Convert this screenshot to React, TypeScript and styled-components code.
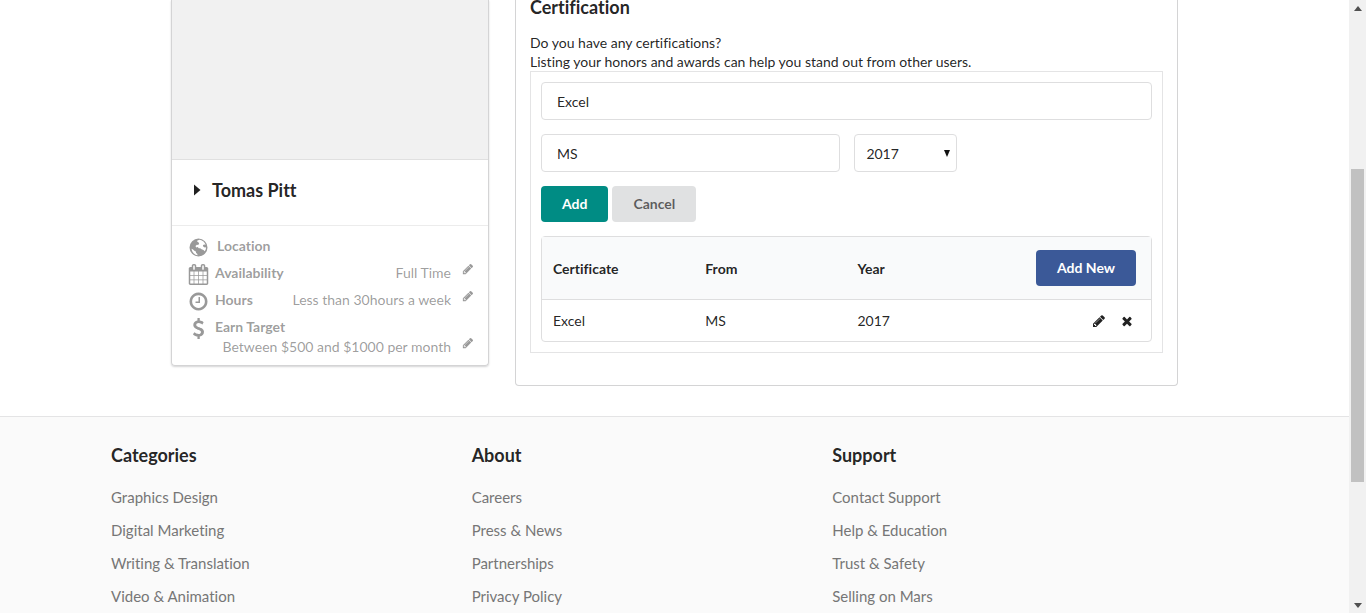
import React, { useState } from "react";
import styled, { createGlobalStyle } from "styled-components";

const GlobalStyle = createGlobalStyle`
  *, *::before, *::after { box-sizing: border-box; }
  body {
    margin: 0;
    background: #fff;
    color: rgba(0, 0, 0, 0.87);
    font-family: Lato, "Liberation Sans", sans-serif;
    font-size: 14px;
    line-height: 19px;
    font-variant-ligatures: none;
  }
  button, input, select { font: inherit; }
`;

const glyphs = {
  pencil:
    "M491 1536l91-91-235-235-91 91v107h128v128h107zm523-928q0-22-22-22-10 0-17 7l-542 542q-7 7-7 17 0 22 22 22 10 0 17-7l542-542q7-7 7-17zm-54-192l416 416-832 832h-416v-416zm683 96q0 53-37 90l-166 166-416-416 166-165q36-38 90-38 53 0 91 38l235 234q37 39 37 91z",
  close:
    "M1490 1322q0 40-28 68l-136 136q-28 28-68 28t-68-28l-294-294-294 294q-28 28-68 28t-68-28l-136-136q-28-28-28-68t28-68l294-294-294-294q-28-28-28-68t28-68l136-136q28-28 68-28t68 28l294 294 294-294q28-28 68-28t68 28l136 136q28 28 28 68t-28 68l-294 294 294 294q28 28 28 68z",
  clock:
    "M1024 544v448q0 14-9 23t-23 9h-320q-14 0-23-9t-9-23v-64q0-14 9-23t23-9h224v-352q0-14 9-23t23-9h64q14 0 23 9t9 23zm416 352q0-148-73-273t-198-198-273-73-273 73-198 198-73 273 73 273 198 198 273 73 273-73 198-198 73-273zm224 0q0 209-103 385.5t-279.5 279.5-385.5 103-385.5-103-279.5-279.5-103-385.5 103-385.5 279.5-279.5 385.5-103 385.5 103 279.5 279.5 103 385.5z",
  calendar:
    "M192 1664h288v-288h-288v288zm352 0h320v-288h-320v288zm-352-352h288v-320h-288v320zm352 0h320v-320h-320v320zm-352-384h288v-288h-288v288zm736 736h320v-288h-320v288zm-384-736h320v-288h-320v288zm768 736h288v-288h-288v288zm-384-352h320v-320h-320v320zm-352-864v-288q0-13-9.5-22.5t-22.5-9.5h-64q-13 0-22.5 9.5t-9.5 22.5v288q0 13 9.5 22.5t22.5 9.5h64q13 0 22.5-9.5t9.5-22.5zm736 864h288v-320h-288v320zm-384-384h320v-288h-320v288zm384 0h288v-288h-288v288zm32-480v-288q0-13-9.5-22.5t-22.5-9.5h-64q-13 0-22.5 9.5t-9.5 22.5v288q0 13 9.5 22.5t22.5 9.5h64q13 0 22.5-9.5t9.5-22.5zm384-64v1280q0 52-38 90t-90 38h-1408q-52 0-90-38t-38-90v-1280q0-52 38-90t90-38h128v-96q0-66 47-113t113-47h64q66 0 113 47t47 113v96h384v-96q0-66 47-113t113-47h64q66 0 113 47t47 113v96h128q52 0 90 38t38 90z",
  dollar:
    "M1362 1185q0 153-99.5 263.5t-258.5 136.5v175q0 14-9 23t-23 9h-135q-13 0-22.5-9.5t-9.5-22.5v-175q-66-9-127.5-31t-101.5-44.5-74-48-46.5-37.5-17.5-18q-17-21-2-41l103-135q7-10 23-12 15-2 24 9l2 2q113 99 243 125 37 8 74 8 81 0 142.5-43t61.5-122q0-28-15-53t-33.5-42-58.5-37.5-66-32-80-32.5q-39-16-61.5-25t-61.5-26.5-62.5-31-56.5-35.5-53.5-42.5-43.5-49-35.5-58-21-66.5-8.5-78q0-138 98-242t255-134v-180q0-13 9.5-22.5t22.5-9.5h135q14 0 23 9t9 23v176q57 6 110.5 23t87 33.5 63.5 37.5 39 29 15 14q17 18 5 38l-81 146q-8 15-23 16-14 3-27-7-3-3-14.5-12t-39-26.5-58.5-32-74.5-26-85.5-11.5q-95 0-155 43t-60 111q0 26 8.5 48t29.5 41.5 39.5 33 56 31 60.5 27 70 27.5q53 20 81 31.5t76 35 75.5 42.5 62 50 53 63.5 31.5 76.5 13 94z",
  globe:
    "M896 128a768 768 0 1 0 0 1536a768 768 0 1 0 0-1536zM800 290l190-60 150 50 180 110 120 150 60 130-130-20-100 60 40 130 130 60 100-30-20 180-90 170-110-120-160-50-120-90-120 10-90-110-130 30-60-120 120-110 110 30 80-130-60-110-100-50zM300 1000l130 60 110 110 130 60 20 130 90 70 40 130-170-50-170-120-120-170z",
};

type GlyphName = keyof typeof glyphs;

function Icon({ name, size }: { name: GlyphName; size: number }) {
  return (
    <svg width={size} height={size} viewBox="0 0 1792 1792" fill="currentColor" fillRule="evenodd" aria-hidden="true">
      <path d={glyphs[name]} />
    </svg>
  );
}

const Window = styled.div`
  display: flex;
  height: 100vh;
  overflow: hidden;
`;

const Page = styled.div`
  flex: 1;
  min-width: 0;
`;

const Profile = styled.main`
  display: grid;
  grid-template-columns: minmax(0, 318fr) minmax(0, 663fr);
  align-items: start;
  gap: 26px;
  max-width: 1007px;
  margin: 0 auto 30px;
`;

const Card = styled.aside`
  border: 1px solid #d4d4d5;
  border-top: 0;
  border-radius: 0 0 4px 4px;
  box-shadow: 0 1px 2px #d4d4d5;
`;

const Photo = styled.div`
  height: 160px;
  background: #f1f1f1;
  border-bottom: 1px solid #e0e0e0;
`;

const NameBar = styled.div`
  display: flex;
  align-items: center;
  height: 66px;
  padding: 0 22px 5px;
  gap: 11px;
  border-bottom: 1px solid #ececec;
`;

const Name = styled.h2`
  margin: 0;
  font-size: 18px;
  line-height: 24px;
  font-weight: 700;
`;

const Details = styled.dl`
  display: grid;
  gap: 7px;
  margin: 0;
  padding: 10px 14px 8px 16px;
  color: rgba(0, 0, 0, 0.4);
`;

const Detail = styled.div<{ $wrap?: boolean }>`
  display: flex;
  flex-wrap: ${(p) => (p.$wrap ? "wrap" : "nowrap")};
  line-height: 20px;
`;

const Label = styled.dt<{ $wide?: boolean }>`
  display: flex;
  height: 20px;
  gap: ${(p) => (p.$wide ? "8px" : "6px")};
  font-weight: 700;
  svg { margin-top: 1px; }
`;

const Value = styled.dd<{ $full?: boolean }>`
  display: flex;
  justify-content: flex-end;
  flex: ${(p) => (p.$full ? "0 0 100%" : "1")};
  height: 20px;
  gap: 11px;
  margin: 0;
  line-height: 19px;
`;

const IconButton = styled.button`
  display: inline-flex;
  align-self: flex-start;
  padding: 0;
  border: 0;
  background: none;
  color: inherit;
  cursor: pointer;
`;

const Panel = styled.section`
  padding: 0 14px 32px;
  border: 1px solid #d4d4d5;
  border-top: 0;
  border-radius: 0 0 4px 4px;
`;

const PanelTitle = styled.h3`
  margin: 0 0 19px;
  font-size: 18px;
  line-height: 14px;
  font-weight: 700;
`;

const Text = styled.p`
  margin: 0;
`;

const Frame = styled.div`
  display: grid;
  gap: 14px;
  padding: 10px;
  border: 1px solid #e4e4e5;
`;

const FieldRow = styled.div`
  display: flex;
  gap: 14px;
`;

const Field = styled.input<{ $half?: boolean }>`
  width: ${(p) => (p.$half ? "49%" : "100%")};
  height: 38px;
  padding: 0 15px;
  border: 1px solid #dededf;
  border-radius: 4px;
  background: #fff;
  color: inherit;
`;

const YearBox = styled.div`
  position: relative;
  width: 103px;
`;

const YearSelect = styled.select`
  appearance: none;
  width: 100%;
  height: 38px;
  padding: 0 11px;
  border: 1px solid #dededf;
  border-radius: 4px;
  background: #fff;
  color: inherit;
`;

const SelectArrow = styled.svg`
  position: absolute;
  top: 16px;
  right: 7px;
  pointer-events: none;
`;

const Actions = styled.div`
  display: flex;
  gap: 4px;
`;

const tones = {
  teal: "#008c84",
  grey: "#e0e1e2",
  blue: "#3b5998",
};

const Button = styled.button<{ $tone: keyof typeof tones }>`
  height: 36px;
  padding: 0 21px 2px;
  border: 0;
  border-radius: 4px;
  background: ${(p) => tones[p.$tone]};
  color: ${(p) => (p.$tone === "grey" ? "rgba(0, 0, 0, 0.6)" : "#fff")};
  font-weight: 700;
  cursor: pointer;
`;

const Table = styled.table`
  width: 100%;
  table-layout: fixed;
  border: 1px solid #dededf;
  border-radius: 4px;
  border-spacing: 0;
  text-align: left;

  th, td { padding: 0 11px; }
  th {
    height: 63px;
    background: #f9fafb;
    border-bottom: 1px solid #dededf;
    font-weight: 700;
  }
  td { height: 41px; }
  th:last-child { padding-right: 15px; text-align: right; }
  td:last-child { padding-right: 17px; }
`;

const RowActions = styled.div`
  display: flex;
  justify-content: flex-end;
  gap: 14px;
`;

const Footer = styled.footer`
  min-height: 100vh;
  padding: 26px 14px;
  border-top: 1px solid #e4e4e5;
  background: #fafafa;
`;

const FooterGrid = styled.div`
  display: grid;
  grid-template-columns: repeat(3, 32%);
  max-width: 1127px;
  margin: 0 auto;
`;

const FooterTitle = styled.h4`
  margin: 0 0 20px;
  font-size: 18px;
  line-height: 24px;
  font-weight: 700;
`;

const LinkList = styled.ul`
  display: grid;
  gap: 13px;
  margin: 0;
  padding: 0;
  list-style: none;
  line-height: 20px;
`;

const FooterLink = styled.a`
  display: block;
  color: #767676;
  font-size: 15px;
  text-decoration: none;
`;

const Rail = styled.div`
  display: flex;
  flex-direction: column;
  align-items: center;
  width: 17px;
  padding: 6px 0 5px;
  background: #f1f1f1;
`;

const Before = styled.div`
  flex: 158;
`;

const Thumb = styled.div`
  flex: 313;
  width: 13px;
  background: #c1c1c1;
`;

const After = styled.div`
  flex: 121;
`;

const footerGroups = [
  { title: "Categories", links: ["Graphics Design", "Digital Marketing", "Writing & Translation", "Video & Animation"] },
  { title: "About", links: ["Careers", "Press & News", "Partnerships", "Privacy Policy"] },
  { title: "Support", links: ["Contact Support", "Help & Education", "Trust & Safety", "Selling on Mars"] },
];

function EditButton({ label }: { label: string }) {
  return (
    <IconButton type="button" aria-label={label}>
      <Icon name="pencil" size={12} />
    </IconButton>
  );
}

export default function App() {
  const [certificate, setCertificate] = useState("Excel");
  const [issuer, setIssuer] = useState("MS");
  const [year, setYear] = useState("2017");

  return (
    <>
      <GlobalStyle />
      <Window>
        <Page>
          <Profile>
            <Card>
              <Photo />
              <NameBar>
                <svg width="7" height="12" viewBox="0 0 7 12" fill="currentColor" aria-hidden="true">
                  <path d="M0 0.5L6.5 6L0 11.5z" />
                </svg>
                <Name>Tomas Pitt</Name>
              </NameBar>
              <Details>
                <Detail>
                  <Label $wide><Icon name="globe" size={21} />Location</Label>
                </Detail>
                <Detail>
                  <Label><Icon name="calendar" size={21} />Availability</Label>
                  <Value>Full Time<EditButton label="Edit availability" /></Value>
                </Detail>
                <Detail>
                  <Label><Icon name="clock" size={21} />Hours</Label>
                  <Value>Less than 30hours a week<EditButton label="Edit hours" /></Value>
                </Detail>
                <Detail $wrap>
                  <Label><Icon name="dollar" size={21} />Earn Target</Label>
                  <Value $full>Between $500 and $1000 per month<EditButton label="Edit earn target" /></Value>
                </Detail>
              </Details>
            </Card>

            <Panel>
              <PanelTitle>Certification</PanelTitle>
              <Text>Do you have any certifications?</Text>
              <Text>Listing your honors and awards can help you stand out from other users.</Text>
              <Frame>
                <Field aria-label="Certificate" value={certificate} onChange={(e) => setCertificate(e.target.value)} />
                <FieldRow>
                  <Field $half aria-label="Certified from" value={issuer} onChange={(e) => setIssuer(e.target.value)} />
                  <YearBox>
                    <YearSelect aria-label="Year" value={year} onChange={(e) => setYear(e.target.value)}>
                      <option>2017</option>
                      <option>2018</option>
                    </YearSelect>
                    <SelectArrow width="6" height="7" viewBox="0 0 6 7" aria-hidden="true">
                      <path d="M0 0h6L3 7z" fill="#111" />
                    </SelectArrow>
                  </YearBox>
                </FieldRow>
                <Actions>
                  <Button type="button" $tone="teal">Add</Button>
                  <Button type="button" $tone="grey">Cancel</Button>
                </Actions>
                <Table>
                  <thead>
                    <tr>
                      <th>Certificate</th>
                      <th>From</th>
                      <th>Year</th>
                      <th><Button type="button" $tone="blue">Add New</Button></th>
                    </tr>
                  </thead>
                  <tbody>
                    <tr>
                      <td>Excel</td>
                      <td>MS</td>
                      <td>2017</td>
                      <td>
                        <RowActions>
                          <IconButton type="button" aria-label="Edit certificate"><Icon name="pencil" size={14} /></IconButton>
                          <IconButton type="button" aria-label="Delete certificate"><Icon name="close" size={14} /></IconButton>
                        </RowActions>
                      </td>
                    </tr>
                  </tbody>
                </Table>
              </Frame>
            </Panel>
          </Profile>

          <Footer>
            <FooterGrid>
              {footerGroups.map((group) => (
                <nav key={group.title} aria-label={group.title}>
                  <FooterTitle>{group.title}</FooterTitle>
                  <LinkList>
                    {group.links.map((link) => (
                      <li key={link}><FooterLink href="#">{link}</FooterLink></li>
                    ))}
                  </LinkList>
                </nav>
              ))}
            </FooterGrid>
          </Footer>
        </Page>
        <Rail aria-hidden="true">
          <svg width="8" height="5" viewBox="0 0 8 5"><path d="M0 5L4 0L8 5z" fill="#505050" /></svg>
          <Before />
          <Thumb />
          <After />
          <svg width="8" height="5" viewBox="0 0 8 5"><path d="M0 0L4 5L8 0z" fill="#505050" /></svg>
        </Rail>
      </Window>
    </>
  );
}
